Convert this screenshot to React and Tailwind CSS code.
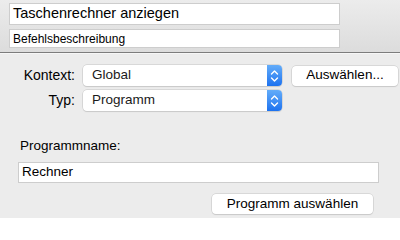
import React from "react";

function Stepper() {
  return (
    <div className="w-[15px] h-full rounded-r-[4px] bg-gradient-to-b from-[#63acf9] to-[#1c72ef] flex items-center justify-center">
      <svg width="9" height="14" viewBox="0 0 9 14" fill="none" stroke="white" strokeWidth="1.4" strokeLinecap="round" strokeLinejoin="round">
        <path d="M1.5 5 L4.5 2 L7.5 5" />
        <path d="M1.5 9 L4.5 12 L7.5 9" />
      </svg>
    </div>
  );
}

function Popup({ label }) {
  return (
    <div className="w-[199px] h-[21px] flex bg-white rounded-[4px] shadow-[0_0_0_0.5px_#c4c4c4,0_1px_1px_rgba(0,0,0,0.12)]">
      <div className="flex-1 flex items-center pl-[9px] text-[13.5px] text-[#1a1a1a]">{label}</div>
      <Stepper />
    </div>
  );
}

export default function App() {
  return (
    <div className="w-[400px] h-[218px] overflow-hidden bg-[#ececec] text-black" style={{ fontFamily: '"Liberation Sans", Arial, sans-serif' }}>
      <div className="h-[52px] bg-gradient-to-b from-[#ececec] to-[#dcdcdc] pl-[9px] pt-[3px] flex flex-col gap-[4px]">
        <div className="w-[331px] h-[22px] bg-white border border-[#cdcdcd] flex items-center pl-[3px] text-[14.5px]">Taschenrechner anziegen</div>
        <div className="w-[331px] h-[19px] bg-white border border-[#cdcdcd] flex items-center pl-[3px] text-[12px]">Befehlsbeschreibung</div>
      </div>
      <div className="h-[1px] bg-[#7c7c7c]" />
      <div className="h-[1px] bg-[#f6f6f6]" />
      <div className="pt-[11px] flex flex-col gap-[4px]">
        <div className="flex items-center">
          <div className="w-[75px] text-right text-[14px]">Kontext:</div>
          <div className="ml-[8px]"><Popup label="Global" /></div>
          <div className="ml-[10px] w-[106px] h-[20px] bg-white rounded-[4px] shadow-[0_0_0_0.5px_#c4c4c4,0_1px_1px_rgba(0,0,0,0.12)] flex items-center justify-center text-[13.5px]">Auswählen...</div>
        </div>
        <div className="flex items-center">
          <div className="w-[75px] text-right text-[14px]">Typ:</div>
          <div className="ml-[8px]"><Popup label="Programm" /></div>
        </div>
      </div>
      <div className="pl-[20px] pt-[27px] text-[13.5px] leading-[16px]">Programmname:</div>
      <div className="ml-[18px] mt-[8px] w-[361px] h-[21px] bg-white border border-[#cdcdcd] flex items-center pl-[3px] text-[13.5px]">Rechner</div>
      <div className="ml-[212px] mt-[11px] w-[161px] h-[20px] bg-white rounded-[4px] shadow-[0_0_0_0.5px_#c4c4c4,0_1px_1px_rgba(0,0,0,0.12)] flex items-center justify-center text-[13.5px]">Programm auswählen</div>
    </div>
  );
}
